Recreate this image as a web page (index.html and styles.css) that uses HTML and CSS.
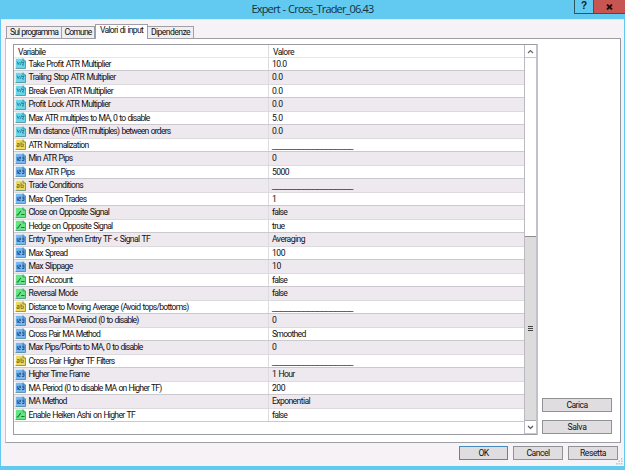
FILE: index.html
```html
<!DOCTYPE html>
<html lang="it">
<head>
<meta charset="utf-8">
<title>Expert - Cross_Trader_06.43</title>
<link rel="stylesheet" href="styles.css">
</head>
<body>
<svg class="defs" width="0" height="0">
  <symbol id="page" viewBox="0 0 11 11"><path d="M.5.5h8l2 2v8H.5z" fill="currentColor"/><path d="M.5 10.5V.5h8" fill="none" stroke="#fff" stroke-opacity=".45"/><path d="M8 .5v2.5h2.5M10.5 3v7.5H.5" fill="none" stroke="#29677c" stroke-opacity=".6"/></symbol>
</svg>
<div class="window">
  <header class="title">
    <span data-w="122">Expert - Cross_Trader_06.43</span>
    <div class="caption"><b class="help">?</b><b class="close"><svg width="7" height="6" viewBox="0 0 7 6"><path d="M1 .5L6 5.5M6 .5L1 5.5" stroke="#1d0d0d" stroke-width="1.8"/></svg></b></div>
  </header>
  <main class="body">
    <nav class="tabs">
      <div class="tab t1"><span data-w="48">Sul programma</span></div>
      <div class="tab t2"><span data-w="27">Comune</span></div>
      <div class="tab t3 active"><span data-w="43">Valori di input</span></div>
      <div class="tab t4"><span data-w="39">Dipendenze</span></div>
    </nav>
    <section class="panel">
      <div class="list">
        <div class="grid">
          <div class="head"><div class="name"><span data-w="27.5">Variabile</span></div><div class="value"><span data-w="21">Valore</span></div></div>
          <div id="rows"></div>
        </div>
        <div class="scroll">
          <div class="arrow"><svg width="7" height="5" viewBox="0 0 7 5"><path d="M1 4l2.5-2.5L6 4" fill="none" stroke="#666" stroke-width="1.2"/></svg></div>
          <div class="track"></div>
          <div class="thumb"><i></i><i></i><i></i></div>
          <div class="arrow"><svg width="7" height="5" viewBox="0 0 7 5"><path d="M1 1l2.5 2.5L6 1" fill="none" stroke="#555" stroke-width="1.2"/></svg></div>
        </div>
      </div>
      <div class="side">
        <div class="btn"><span data-w="21">Carica</span></div>
        <div class="btn"><span data-w="19">Salva</span></div>
      </div>
    </section>
    <footer class="actions">
      <div class="btn ok"><span data-w="10">OK</span></div>
      <div class="btn cancel"><span data-w="23">Cancel</span></div>
      <div class="btn reset"><span data-w="26">Resetta</span></div>
    </footer>
    <svg class="grip" width="7" height="7" viewBox="0 0 7 7"><path d="M5 0h1.5v1.5H5zM5 2.5h1.5V4H5zM5 5h1.5v1.5H5zM2.5 2.5H4V4H2.5zM2.5 5H4v1.5H2.5zM0 5h1.5v1.5H0z" fill="#c4c1c5"/></svg>
  </main>
</div>
<script src="rows.js"></script>
</body>
</html>
```
FILE: styles.css
```css
* { box-sizing: border-box; }
body { margin: 0; width: 625px; height: 470px; overflow: hidden; background: #62caf0; font: 8.6px/13px Roboto, "Liberation Sans", sans-serif; word-spacing: .8px; color: #100e12; }
.defs { position: absolute; }
span { white-space: pre; display: inline-block; }
.window { height: 470px; display: flex; flex-direction: column; padding: 0 1px 4px; }
.title { height: 19px; flex: none; position: relative; display: flex; justify-content: center; align-items: flex-start; font: 11px/18px "Open Sans", "Noto Sans", sans-serif; color: #17303b; }
.caption { position: absolute; right: -1px; top: 0; display: flex; height: 14px; border: 1px solid #315463; border-top: 0; border-right: 0; }
.help { width: 19px; text-align: center; font: bold 10px/12px "Liberation Sans", sans-serif; color: #10191d; border-right: 1px solid #69434a; }
.close { width: 31px; background: #c75552; display: flex; align-items: center; justify-content: center; }
.body { flex: 1; background: #f6f2f6; border-top: 1px solid #d5edf6; position: relative; padding: 4px 3px 0 4px; }
.tabs { display: flex; align-items: flex-end; height: 14px; padding-left: 1px; }
.tab { height: 12px; background: #f1eef1; border: 1px solid #a09fa7; border-bottom: 0; display: flex; justify-content: center; align-items: center; }
.t1 { width: 56px; }
.t2 { width: 33px; border-left: 0; }
.t3 { width: 53px; }
.t4 { width: 46px; border-left: 0; }
.tab.active { height: 15px; margin-bottom: -1px; background: #fff; position: relative; padding-bottom: 3px; }
.panel { height: 405px; border: 1px solid #9e9fa6; border-left-color: #c5c4ca; border-right-color: #8f979e; background: #fff; display: flex; padding: 5px 7px 6px; }
.list { width: 525px; height: 391px; border: 1px solid #9a9ba4; border-right: 2px solid #c2c1c9; display: flex; }
.grid { width: 510px; }
.head, .row { display: flex; }
.head { height: 12.5px; border-bottom: 1px solid #e7e5e9; }
.head span { line-height: 12px; position: relative; top: 1px; }
.name { width: 255px; border-right: 1px solid #dedbe0; display: flex; align-items: center; padding-left: 1px; }
.value { padding-left: 3px; display: flex; align-items: center; }
.head .name { padding-left: 4px; }
.head .value { padding-left: 4px; }
.row { height: 13.5px; border-bottom: 1px solid #dddade; background: #fff; }
.row span { padding-top: 1px; }
.row:nth-child(even) { background: #eee9ee; }
.row:nth-child(odd) { border-bottom-color: #cbc8ce; }
.row .rule { font-family: "Liberation Sans", sans-serif; }
.icon { width: 11px; height: 11px; margin-right: 2.5px; flex: none; }
.real { color: #69d7e8; }
.text { color: #ecd95e; }
.int { color: #78b8f2; }
.bool { color: #64e582; }
.scroll { width: 12px; display: flex; flex-direction: column; border-left: 1px solid #bbb9bf; }
.arrow { height: 13px; border-bottom: 1px solid #c9c7cc; display: flex; align-items: center; justify-content: center; }
.track { height: 178px; }
.thumb { flex: 1; background: #dddcdd; border-top: 1px solid #8d8c90; border-bottom: 1px solid #aaa9ad; display: flex; flex-direction: column; align-items: center; justify-content: center; gap: 1px; }
.thumb i { width: 5px; height: 1px; background: #454548; }
.side { margin-left: 4px; padding-bottom: 2px; display: flex; flex-direction: column; justify-content: flex-end; gap: 8px; }
.btn { height: 14px; width: 70px; background: #dfdddf; border: 1px solid #929195; display: flex; align-items: center; justify-content: center; }
.actions { display: flex; justify-content: flex-end; gap: 5px; padding: 3px 3px 0; }
.ok { width: 49px; border-color: #438cbc; }
.cancel { width: 50px; }
.reset { width: 50px; }
.grip { position: absolute; right: 1px; bottom: 1px; }
```
FILE: rows.js
```js
// kind, label, label width, value, value width
const data = [
  ["real", "Take Profit ATR Multiplier", 82, "10.0", 14.5],
  ["real", "Trailing Stop ATR Multiplier", 87, "0.0", 10.5],
  ["real", "Break Even ATR Multiplier", 84.5, "0.0", 10.5],
  ["real", "Profit Lock ATR Multiplier", 81.5, "0.0", 10.5],
  ["real", "Max ATR multiples to MA, 0 to disable", 121, "5.0", 10.5],
  ["real", "Min distance (ATR multiples) between orders", 142, "0.0", 10.5],
  ["text", "ATR Normalization", 60, "__________________", 81],
  ["int", "Min ATR Pips", 44, "0", 4.5],
  ["int", "Max ATR Pips", 46, "5000", 17],
  ["text", "Trade Conditions", 54.5, "__________________", 81],
  ["int", "Max Open Trades", 58, "1", 4],
  ["bool", "Close on Opposite Signal", 80.5, "false", 15],
  ["bool", "Hedge on Opposite Signal", 84, "true", 12.5],
  ["int", "Entry Type when Entry TF < Signal TF", 121.5, "Averaging", 33],
  ["int", "Max Spread", 39, "100", 13],
  ["int", "Max Slippage", 44, "10", 9],
  ["bool", "ECN Account", 44, "false", 15],
  ["bool", "Reversal Mode", 49, "false", 15],
  ["text", "Distance to Moving Average (Avoid tops/bottoms)", 160, "__________________", 81],
  ["int", "Cross Pair MA Period (0 to disable)", 110, "0", 4.5],
  ["int", "Cross Pair MA Method", 71.5, "Smoothed", 33.5],
  ["int", "Max Pips/Points to MA, 0 to disable", 114, "0", 4.5],
  ["text", "Cross Pair Higher TF Filters", 86, "__________________", 81],
  ["int", "Higher Time Frame", 60.5, "1 Hour", 22.5],
  ["int", "MA Period (0 to disable MA on Higher TF)", 133, "200", 13],
  ["int", "MA Method", 38, "Exponential", 38],
  ["bool", "Enable Heiken Ashi on Higher TF", 106.5, "false", 15]
];
const marks = {
  real: '<path d="M2 3.5l1.2 3L4.5 4M5 7l2-4M7 4.5h2L7.3 7H9" fill="none" stroke="#207f9b" stroke-width=".9"/>',
  text: '<path d="M2 4.5h2.2V7.5H2V6h2M6 2.8v4.7h2.3V5H6" fill="none" stroke="#86751b" stroke-width=".9"/>',
  int: '<path d="M2.3 4v3.8M3.5 4.2h2v1.6h-2v1.7h2M7 4.2h2v3.3H7M7.3 5.8H9" fill="none" stroke="#1d518c" stroke-width=".9"/>',
  bool: '<path d="M1.5 8h1.3l3-4M6.2 7.5H9.5" fill="none" stroke="#167a35" stroke-width="1.1"/>'
};
document.getElementById("rows").innerHTML = data.map(([kind, label, lw, value, vw]) =>
  `<div class="row"><div class="name"><svg class="icon ${kind}" viewBox="0 0 11 11"><use href="#page"/>${marks[kind]}</svg><span data-w="${lw}">${label.replace("<", "&lt;")}</span></div><div class="value"><span${kind === "text" ? ' class="rule"' : ""} data-w="${vw}">${value}</span></div></div>`
).join("");
// Track each text so that it fills its width.
document.querySelectorAll("[data-w]").forEach(el => {
  const natural = el.getBoundingClientRect().width;
  el.style.letterSpacing = (el.dataset.w - natural) / el.textContent.length + "px";
});
```
